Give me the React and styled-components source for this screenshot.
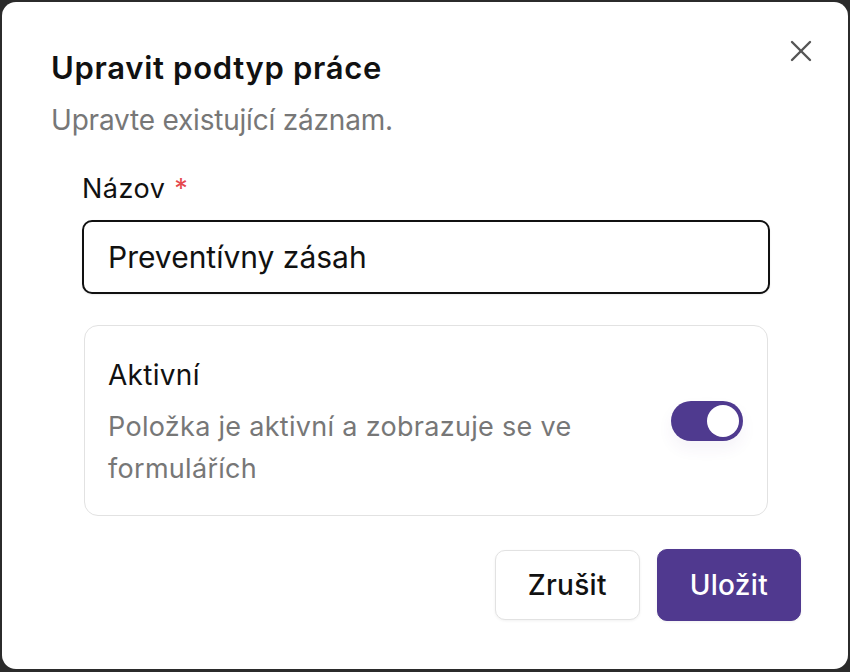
import React, { useState } from 'react';
import styled, { createGlobalStyle } from 'styled-components';

const GlobalStyle = createGlobalStyle`
  html, body {
    margin: 0;
    padding: 0;
    background: #2b2b2b;
    font-family: Inter, "Noto Sans", sans-serif;
  }
  * { box-sizing: border-box; }
`;

const Backdrop = styled.div`
  width: 850px;
  height: 672px;
  padding: 2px 2px 3px 2px;
  background: #2b2b2b;
`;

const Dialog = styled.div`
  position: relative;
  height: 100%;
  background: #ffffff;
  border-radius: 14px;
  padding: 47px 47px 48px 49px;
  display: flex;
  flex-direction: column;
`;

const CloseButton = styled.button`
  position: absolute;
  top: 31px;
  right: 29px;
  width: 36px;
  height: 36px;
  border: none;
  background: none;
  padding: 0;
  display: flex;
  align-items: center;
  justify-content: center;
  color: #555555;
  cursor: pointer;
`;

const Title = styled.h2`
  margin: 0;
  font-size: 31px;
  line-height: 38px;
  font-weight: 600;
  color: #111111;
  letter-spacing: 0.7px;
`;

const Subtitle = styled.p`
  margin: 15px 0 0;
  font-size: 28px;
  line-height: 36px;
  color: #777777;
  letter-spacing: -0.2px;
`;

const Form = styled.div`
  margin-top: 34px;
  padding: 0 31px;
  display: flex;
  flex-direction: column;
`;

const Label = styled.label`
  font-size: 27px;
  line-height: 34px;
  color: #111111;
  letter-spacing: 0.5px;
`;

const Required = styled.span`
  color: #e5484d;
  margin-left: 9px;
`;

const Input = styled.input`
  margin-top: 14px;
  height: 74px;
  border: 2px solid #111111;
  border-radius: 10px;
  padding: 0 24px;
  font-family: inherit;
  font-size: 30px;
  color: #111111;
  outline: none;
  background: #ffffff;
  box-shadow: 0 1px 2px rgba(0, 0, 0, 0.08);
`;

const Card = styled.div`
  margin: 31px 2px 0 2px;
  border: 1px solid #e2e2e2;
  border-radius: 14px;
  padding: 32px 24px 25px 23px;
  display: flex;
  align-items: center;
  gap: 24px;
`;

const CardText = styled.div`
  flex: 1;
  display: flex;
  flex-direction: column;
`;

const CardTitle = styled.div`
  font-size: 28px;
  line-height: 34px;
  color: #111111;
  letter-spacing: 0.3px;
`;

const CardDesc = styled.div`
  margin-top: 14px;
  font-size: 27px;
  line-height: 42px;
  color: #777777;
  letter-spacing: 0.3px;
`;

const Switch = styled.button`
  flex: none;
  margin-bottom: 6px;
  width: 72px;
  height: 40px;
  border-radius: 20px;
  border: none;
  padding: 4px;
  background: ${p => (p.$on ? '#4f3a8f' : '#d4d4d8')};
  display: flex;
  justify-content: ${p => (p.$on ? 'flex-end' : 'flex-start')};
  cursor: pointer;
  box-shadow: 0 8px 16px rgba(79, 58, 143, 0.06);
`;

const Knob = styled.span`
  width: 32px;
  height: 32px;
  border-radius: 50%;
  background: #ffffff;
`;

const Footer = styled.div`
  margin-top: 33px;
  display: flex;
  justify-content: flex-end;
  align-items: center;
  gap: 17px;
`;

const Button = styled.button`
  height: ${p => (p.$primary ? '72px' : '70px')};
  padding: 0 32px;
  border-radius: 10px;
  font-family: inherit;
  font-size: 28px;
  font-weight: 500;
  letter-spacing: 0.3px;
  cursor: pointer;
  border: 1px solid ${p => (p.$primary ? '#50398f' : '#e2e2e2')};
  background: ${p => (p.$primary ? '#50398f' : '#ffffff')};
  color: ${p => (p.$primary ? '#ffffff' : '#111111')};
  box-shadow: 0 1px 3px rgba(0, 0, 0, 0.06);
`;

export default function App() {
  const [active, setActive] = useState(true);
  return (
    <>
      <GlobalStyle />
      <Backdrop>
        <Dialog>
          <CloseButton aria-label="Zavřít">
            <svg width="36" height="36" viewBox="0 0 24 24" fill="none" stroke="currentColor" strokeWidth="1.6" strokeLinecap="round">
              <path d="M18 6 6 18" />
              <path d="m6 6 12 12" />
            </svg>
          </CloseButton>
          <Title>Upravit podtyp práce</Title>
          <Subtitle>Upravte existující záznam.</Subtitle>
          <Form>
            <Label>
              Názov<Required>*</Required>
            </Label>
            <Input defaultValue="Preventívny zásah" />
            <Card>
              <CardText>
                <CardTitle>Aktivní</CardTitle>
                <CardDesc>Položka je aktivní a zobrazuje se ve formulářích</CardDesc>
              </CardText>
              <Switch $on={active} onClick={() => setActive(!active)}>
                <Knob />
              </Switch>
            </Card>
          </Form>
          <Footer>
            <Button>Zrušit</Button>
            <Button $primary>Uložit</Button>
          </Footer>
        </Dialog>
      </Backdrop>
    </>
  );
}
